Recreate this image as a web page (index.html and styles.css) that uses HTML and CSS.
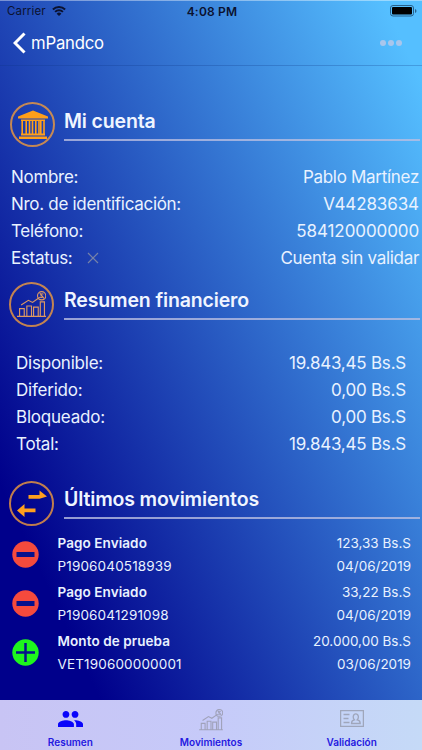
FILE: index.html
```html
<!DOCTYPE html>
<html lang="es">
<head>
  <meta charset="UTF-8">
  <meta name="viewport" content="width=device-width, initial-scale=1.0">
  <title>mPandco</title>
  <link rel="stylesheet" href="styles.css">
</head>
<body>
  <svg width="0" height="0" class="symbols">
    <symbol id="icon-chart" viewBox="0 0 28 26">
      <path d="M0 24.500h28M2.500 24v-7h4.500v7M9.500 24V14.500h4.500V24M16 24v-8.500h4.500V24M22.500 24V10.500h4V24M4 13.500l7-4.500 4 2 7-5" />
      <circle cx="23.800" cy="4.600" r="4" />
      <path d="M25.500 3c-2-1-3.500.8-1.700 1.500s1.200 2.200-1.500 1.400M22 2l4 5" />
    </symbol>
  </svg>

  <div class="app">
    <div class="status-bar">
      <div class="carrier">
        <span>Carrier</span>
        <svg class="wifi" viewBox="0 0 14 10">
          <path d="M.9 3.500a8.800 8.800 0 0 1 12.200 0M3.100 5.900a5.600 5.600 0 0 1 7.800 0" />
          <path class="wifi-dot" d="M4.600 7.700a3.500 3.500 0 0 1 4.800 0L7 10z" />
        </svg>
      </div>
      <div class="clock">4:08 PM</div>
      <svg class="battery" viewBox="0 0 27 12">
        <rect class="battery-case" x=".5" y=".5" width="23" height="10.500" rx="2.500" />
        <rect x="2" y="2" width="20" height="7.500" rx="1" />
        <path class="battery-tip" d="M25 4v4q1.500-.6 1.500-2T25 4z" />
      </svg>
    </div>

    <header class="nav-bar">
      <svg class="back" viewBox="0 0 14 22"><path d="M11.500 1.500L2 11l9.500 9.500" /></svg>
      <span class="nav-title">mPandco</span>
      <div class="more"><i></i><i></i><i></i></div>
    </header>

    <main>
      <section class="account">
        <div class="section-head">
          <div class="badge">
            <svg class="bank" viewBox="0 0 30 30">
              <path d="M15 .5L0 6.500v2h30v-2zM3 9.500h24v1.500H3zM3 23.500h24v2H3zM1 26.500h28v2.500H1z" />
              <path class="bank-column" d="M4.200 11v13M8.200 11v13M11.500 11v13M14.500 11v13M17.800 11v13M21 11v13M22.800 11v13M26 11v13" />
            </svg>
          </div>
          <h2>Mi cuenta</h2>
        </div>
        <div class="row"><span>Nombre:</span><span>Pablo Martínez</span></div>
        <div class="row"><span>Nro. de identificación:</span><span class="number">V44283634</span></div>
        <div class="row"><span>Teléfono:</span><span class="number">584120000000</span></div>
        <div class="row">
          <span>Estatus:</span>
          <svg class="cross" viewBox="0 0 12 12"><path d="M1 1l10 10M11 1L1 11" /></svg>
          <span>Cuenta sin validar</span>
        </div>
      </section>

      <section class="summary">
        <div class="section-head">
          <div class="badge"><svg class="chart"><use href="#icon-chart" /></svg></div>
          <h2>Resumen financiero</h2>
        </div>
        <div class="row"><span>Disponible:</span><span>19.843,45 Bs.S</span></div>
        <div class="row"><span>Diferido:</span><span>0,00 Bs.S</span></div>
        <div class="row"><span>Bloqueado:</span><span>0,00 Bs.S</span></div>
        <div class="row"><span>Total:</span><span>19.843,45 Bs.S</span></div>
      </section>

      <section class="movements">
        <div class="section-head">
          <div class="badge">
            <svg class="arrows" viewBox="0 0 30 28">
              <path d="M11.500 5h11V.500L30 6.500l-7.500 2.200h-11zM18.500 18.500h-11V14L0 20.500 7.500 27v-4.800h11z" />
            </svg>
          </div>
          <h2>Últimos movimientos</h2>
        </div>
        <div class="movement">
          <svg class="sign minus" viewBox="0 0 27 27"><circle cx="13.500" cy="13.500" r="13.200" /><path d="M4.500 13.500h18" /></svg>
          <div class="detail"><strong>Pago Enviado</strong><span>P1906040518939</span></div>
          <div class="amount"><span>123,33 Bs.S</span><span>04/06/2019</span></div>
        </div>
        <div class="movement">
          <svg class="sign minus" viewBox="0 0 27 27"><circle cx="13.500" cy="13.500" r="13.200" /><path d="M4.500 13.500h18" /></svg>
          <div class="detail"><strong>Pago Enviado</strong><span>P1906041291098</span></div>
          <div class="amount"><span>33,22 Bs.S</span><span>04/06/2019</span></div>
        </div>
        <div class="movement">
          <svg class="sign plus" viewBox="0 0 27 27"><circle cx="13.500" cy="13.500" r="13.200" /><path d="M4 13.500h19M13.500 4v19" /></svg>
          <div class="detail"><strong>Monto de prueba</strong><span>VET190600000001</span></div>
          <div class="amount"><span>20.000,00 Bs.S</span><span>03/06/2019</span></div>
        </div>
      </section>
    </main>

    <nav class="tab-bar">
      <div class="tab">
        <svg class="people" viewBox="1 5 22 14">
          <path d="M16 11c1.660 0 2.990-1.340 2.990-3S17.660 5 16 5s-3 1.340-3 3 1.340 3 3 3zM8 11c1.660 0 2.990-1.340 2.990-3S9.660 5 8 5 5 6.340 5 8s1.340 3 3 3zM8 13c-2.330 0-7 1.170-7 3.500V19h14v-2.500C15 14.170 10.330 13 8 13zM16 13c-.29 0-.62.02-.97.05 1.160.84 1.970 1.970 1.970 3.450V19h6v-2.500c0-2.330-4.670-3.500-7-3.500z" />
        </svg>
        <span>Resumen</span>
      </div>
      <div class="tab">
        <svg class="chart"><use href="#icon-chart" /></svg>
        <span>Movimientos</span>
      </div>
      <div class="tab">
        <svg class="id-card" viewBox="0 0 24 17">
          <path d="M.6.600h22.800v15.800H.6zM3.500 4.500h6M3.500 8.500h5M3.500 12.500h6M11.500 13.500c0-2.500 1.200-3.500 2.800-3.700-1.800-2-1.300-6 1.500-6s3.300 4 1.500 6c1.600.2 2.900 1.200 2.900 3.700z" />
        </svg>
        <span>Validación</span>
      </div>
    </nav>
  </div>
</body>
</html>
```
FILE: styles.css
```css
* {
  box-sizing: border-box;
}

body {
  margin: 0;
  font-family: Inter, "Liberation Sans", sans-serif;
  color: #e9f2ff;
}

svg {
  display: block;
  flex: none;
}

.symbols {
  position: absolute;
}

.app {
  display: flex;
  flex-direction: column;
  height: 750px;
  overflow: hidden;
  background: linear-gradient(65deg, #00008b 16%, #55bfff 95%);
}

.status-bar {
  display: grid;
  grid-template-columns: 1fr auto 1fr;
  align-items: center;
  height: 21px;
  padding: 0 5px 0 7px;
  border-top: 1px solid rgba(255, 255, 255, 0.4);
  color: #0b1230;
  font-size: 11.5px;
}

.carrier {
  display: flex;
  align-items: center;
  gap: 6px;
  letter-spacing: 0.15px;
}

.wifi {
  width: 14px;
  height: 10px;
  fill: none;
  stroke: #0b1230;
  stroke-width: 2;
}

.wifi .wifi-dot {
  fill: #0b1230;
  stroke: none;
}

.clock {
  font-weight: 600;
  font-size: 12px;
  letter-spacing: 0.2px;
}

.battery {
  width: 27px;
  height: 12px;
  justify-self: end;
}

.battery-case {
  fill: none;
  stroke: #28618c;
}

.battery-tip {
  fill: #28618c;
}

.nav-bar {
  display: flex;
  align-items: center;
  height: 45px;
  padding: 0 20px 0 13px;
  border-bottom: 1px solid rgba(10, 50, 130, 0.25);
}

.back {
  width: 14px;
  height: 22px;
  fill: none;
  stroke: #fff;
  stroke-width: 3;
}

.nav-title {
  margin-left: 4px;
  font-size: 16.7px;
  letter-spacing: -0.2px;
  color: #fff;
}

.more {
  display: flex;
  gap: 2px;
  margin-left: auto;
}

.more i {
  width: 6px;
  height: 6px;
  border-radius: 50%;
  background: #a9c6ec;
}

main {
  flex: 1;
}

.section-head {
  display: flex;
  align-items: flex-start;
}

.badge {
  display: flex;
  align-items: center;
  justify-content: center;
  width: 45px;
  height: 45px;
  border: 2px solid rgba(240, 155, 60, 0.8);
  border-radius: 50%;
}

h2 {
  flex: 1;
  margin: 0 2px 0 10px;
  height: 38px;
  padding-top: 6px;
  border-bottom: 2px solid rgba(185, 190, 225, 0.8);
  font-size: 19.5px;
  line-height: 25px;
  letter-spacing: -0.15px;
  font-weight: 600;
  color: #f0f5ff;
}

.row {
  display: flex;
  align-items: center;
  height: 26.800px;
  font-size: 17px;
  letter-spacing: -0.3px;
}

.row span:last-child {
  margin-left: auto;
}

.row .number {
  letter-spacing: -0.1px;
}

.account {
  height: 216px;
  padding: 36px 3px 0 11px;
}

.account .section-head {
  height: 62px;
  margin-left: -1px;
  margin-right: -3px;
}

.account h2 {
  height: 39px;
  margin-left: 9px;
  padding-top: 7px;
}

.bank {
  width: 30px;
  height: 30px;
  fill: #ff9f1a;
}

.bank-column {
  stroke: #ff9f1a;
  stroke-width: 1.600;
}

.cross {
  width: 12px;
  height: 12px;
  margin-left: 15px;
  fill: none;
  stroke: #7682a8;
  stroke-width: 1.200;
}

.summary {
  height: 199px;
  padding: 0 16px 0 16px;
}

.summary .section-head {
  height: 68px;
  margin-left: -7px;
  margin-right: -16px;
}

.summary .row {
  letter-spacing: -0.22px;
}

.chart {
  width: 29px;
  height: 27px;
  fill: none;
  stroke: #dc9862;
  stroke-width: 1.100;
}

.movements .section-head {
  height: 49px;
  margin-left: 9px;
}

.arrows {
  width: 30px;
  height: 28px;
  fill: #ffa01e;
}

.movement {
  display: flex;
  align-items: center;
  height: 49px;
  padding: 0 11px 0 12px;
  font-size: 13.5px;
  line-height: 23px;
}

.sign {
  width: 27px;
  height: 27px;
}

.sign path {
  stroke: #06118d;
}

.minus {
  fill: #f54a3d;
  stroke-width: 5;
}

.plus {
  fill: #1ef51e;
  stroke-width: 2.500;
}

.detail,
.amount {
  display: flex;
  flex-direction: column;
}

.detail {
  margin-left: 18.500px;
  letter-spacing: 0.15px;
}

.detail strong {
  font-weight: 600;
  letter-spacing: 0.08px;
}

.amount {
  margin-left: auto;
  text-align: right;
}

.tab-bar {
  display: grid;
  grid-template-columns: repeat(3, 1fr);
  height: 50px;
  background: linear-gradient(90deg, #c8c4f4, #c6caf9 50%, #c5daf7);
}

.tab {
  display: flex;
  flex-direction: column;
  align-items: center;
  padding-bottom: 1px;
  color: #2418e0;
  font-size: 10px;
  font-weight: 600;
  line-height: 13px;
}

.tab svg {
  margin: auto 0 5px;
}

.tab .people {
  width: 25px;
  height: 16px;
  margin-bottom: 9px;
  fill: #0a05fa;
}

.tab .chart {
  width: 24px;
  height: 22px;
  stroke: #a0a2ba;
  stroke-width: 1.300;
}

.tab .id-card {
  width: 24px;
  height: 17px;
  margin-bottom: 9px;
  fill: none;
  stroke: #9fa6bb;
  stroke-width: 1.300;
}
```
